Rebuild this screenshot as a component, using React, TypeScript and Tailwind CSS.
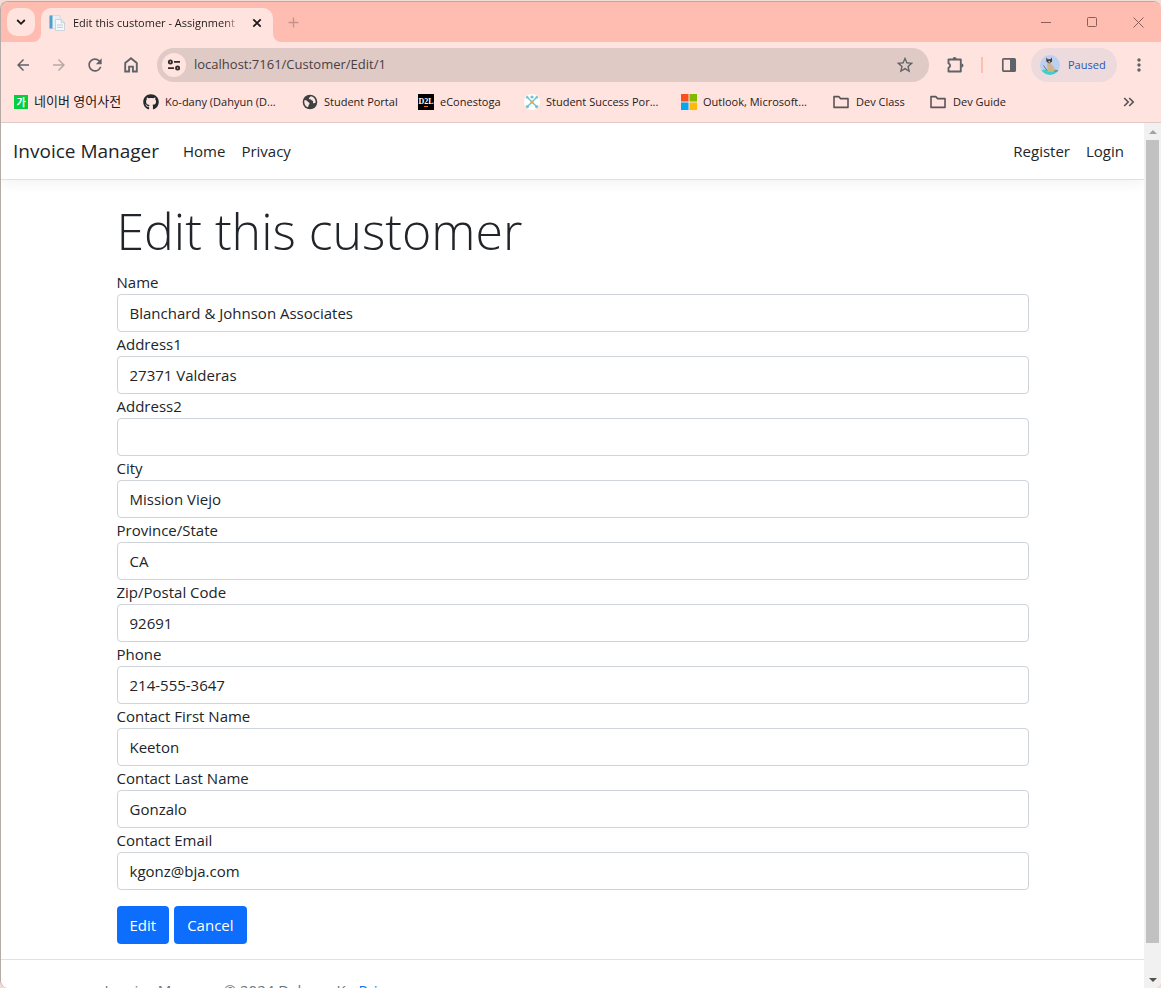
import type { ReactNode } from "react";
import { MdArrowBack, MdArrowForward, MdAdd, MdMoreVert, MdRefresh, MdStarBorder } from "react-icons/md";
import { FaGithub } from "react-icons/fa";

const iconButton = "flex h-7 w-7 shrink-0 items-center justify-center text-[#5f6368]";

function HomeIcon() {
  return (
    <svg width="16" height="18" viewBox="0 0 16 18" fill="none" stroke="currentColor" strokeWidth="1.9">
      <path d="M2.2 6.9 8 2.2l5.8 4.7v8.6H9.9v-4.9H6.1v4.9H2.2z" />
    </svg>
  );
}

function TuneIcon() {
  return (
    <svg width="16" height="16" viewBox="0 0 16 16" fill="none" stroke="#332b2d" strokeWidth="1.8">
      <circle cx="4.4" cy="4.9" r="1.6" />
      <path d="M8 4.9h6M2 11.1h6" />
      <circle cx="11.6" cy="11.1" r="1.6" />
    </svg>
  );
}

function ExtensionIcon() {
  return (
    <svg width="20" height="20" viewBox="0 0 20 20" fill="none">
      <path d="M3.5 4.5h12.3v12H3.5v-3.7a2.3 2.3 0 0 0 0-4.4z" stroke="#5f6368" strokeWidth="1.9" strokeLinejoin="round" />
      <path d="M7.6 3.9a2 2 0 0 1 4 0zM16.4 8.4a2.1 2.1 0 0 1 0 4.2z" fill="#5f6368" />
    </svg>
  );
}

function SidePanelIcon() {
  return (
    <svg width="16" height="16" viewBox="0 0 16 16">
      <rect x="1.8" y="1.8" width="12.4" height="12.4" rx="1" fill="none" stroke="#5f6368" strokeWidth="1.7" />
      <path d="M9 1.5h5v13H9z" fill="#5f6368" />
    </svg>
  );
}

function Avatar() {
  return (
    <svg width="20" height="20" viewBox="0 0 20 20">
      <clipPath id="avatar-clip"><circle cx="10" cy="10" r="10" /></clipPath>
      <g clipPath="url(#avatar-clip)">
        <path d="M0 0h20v20H0z" fill="#bccff0" />
        <path d="M0 15.5q10-2.5 20 0V20H0z" fill="#3fd0c9" />
        <path d="M7.4 7.5c1.2-1.3 3.2-.8 3.5.6.4 2.2 3.9 3.4 4.2 8.6H7.4C8.2 13 6.6 10.500 7.400 7.500z" fill="#cdb48c" />
        <path d="M6.200 2.600 7.800 4.200h2.600l1.600-1.600.1 3.800-2.900 2-2.900-2z" fill="#4a4038" />
        <path d="m8.200 6 1 2.300 1-2.300z" fill="#d8c4a0" />
        <path d="m3.500 10.500 3.500 5M14 16.200l4-.4" stroke="#88775e" strokeWidth="1" />
      </g>
    </svg>
  );
}

function DocumentIcon() {
  return (
    <svg width="16" height="16" viewBox="0 0 16 16">
      <path d="M1 .5h10v13H1z" fill="#e9f0f5" stroke="#c5d4de" strokeWidth=".6" />
      <path d="M.5.5h3v13h-3z" fill="#4f9fd0" />
      <path d="M6.500 4.500h6l3 3v8h-9z" fill="#f5f9fb" stroke="#b9c9d4" strokeWidth=".7" />
      <path d="M12.300 4.500v3.200h3.200M8 10h6M8 12.400h6" fill="none" stroke="#b3c3cf" strokeWidth=".8" />
    </svg>
  );
}

function NaverIcon() {
  return (
    <span className="flex h-3.5 w-3.5 items-center justify-center bg-[#03cf3e] font-['Noto_Sans_CJK_KR',sans-serif] text-[10px] leading-none font-bold text-white">가</span>
  );
}

function GlobeIcon() {
  return (
    <svg width="16" height="16" viewBox="0 0 16 16">
      <circle cx="8" cy="8" r="7.300" fill="#3c4043" />
      <path d="M2.300 6.200c1.600-.2 2.900.2 3.300 1.300.4.900 1.700.7 1.900 1.700.2 1-.9 1.300-.9 2.200 0 .8-.4 1.500-1.100 1.900C3.300 12.200 1.900 9.600 2.300 6.200zM8.700 2.300c-.2 1-1.300.9-1.700 1.600-.4.800.3 1.400 1.100 1.300 1-.1 1 1 1.900 1.200 1.100.3 1.300 1 1 1.800-.2.700.3 1.200 1 1.100l1.600-.5c.3-3.200-1.500-5.800-4.900-6.500z" fill="#ffe3de" />
    </svg>
  );
}

function D2LIcon() {
  return (
    <span className="flex h-4 w-4 items-center justify-center bg-black font-['Liberation_Serif',serif] text-[8px] leading-none font-bold text-white">
      D<span className="border-b border-[#e87722]">2</span>L
    </span>
  );
}

function SuccessIcon() {
  return (
    <svg width="16" height="16" viewBox="0 0 16 16">
      <circle cx="8" cy="8" r="8" fill="#fff" />
      <path d="m3.500 3.500 9 9m0-9-9 9" stroke="#72c3cb" strokeWidth="1.500" />
      <g fill="#72c3cb">
        <circle cx="3.200" cy="3.200" r="1.300" /><circle cx="12.800" cy="3.200" r="1.300" />
        <circle cx="3.400" cy="12.600" r="1.600" /><circle cx="12.600" cy="12.600" r="1.600" /><circle cx="8" cy="3" r="1.600" />
      </g>
      <circle cx="8" cy="8" r="1.500" fill="#f1a33b" />
    </svg>
  );
}

function MicrosoftIcon() {
  return (
    <svg width="16" height="16" viewBox="0 0 16 16">
      <path d="M0 0h7.500v7.500H0z" fill="#f8511f" /><path d="M8.500 0H16v7.500H8.500z" fill="#7fba00" />
      <path d="M0 8.500h7.500V16H0z" fill="#05a6f0" /><path d="M8.500 8.500H16V16H8.500z" fill="#ffba08" />
    </svg>
  );
}

function FolderIcon() {
  return (
    <svg width="18" height="16" viewBox="0 0 18 16" fill="none" stroke="#5a5558" strokeWidth="1.600" strokeLinejoin="round">
      <path d="M2 2.600h4.800l1.800 2H16v8.800H2z" />
    </svg>
  );
}

const bookmarks: { label: string; icon: ReactNode; style: string }[] = [
  { label: "네이버 영어사전", icon: <NaverIcon />, style: "w-[109px] text-[13px]" },
  { label: "Ko-dany (Dahyun (D...", icon: <FaGithub size={16} color="#24292f" />, style: "w-[139px] text-[11px]" },
  { label: "Student Portal", icon: <GlobeIcon />, style: "w-[96px] text-[11px]" },
  { label: "eConestoga", icon: <D2LIcon />, style: "w-[86px] text-[11px]" },
  { label: "Student Success Por...", icon: <SuccessIcon />, style: "w-[137px] text-[11px]" },
  { label: "Outlook, Microsoft...", icon: <MicrosoftIcon />, style: "w-[131px] text-[11px]" },
  { label: "Dev Class", icon: <FolderIcon />, style: "w-[77px] text-[11px]" },
  { label: "Dev Guide", icon: <FolderIcon />, style: "w-[80px] text-[11px]" },
];

const fields = [
  { id: "name", label: "Name", value: "Blanchard & Johnson Associates" },
  { id: "address1", label: "Address1", value: "27371 Valderas" },
  { id: "address2", label: "Address2", value: "" },
  { id: "city", label: "City", value: "Mission Viejo" },
  { id: "province", label: "Province/State", value: "CA" },
  { id: "zip", label: "Zip/Postal Code", value: "92691" },
  { id: "phone", label: "Phone", value: "214-555-3647" },
  { id: "first", label: "Contact First Name", value: "Keeton" },
  { id: "last", label: "Contact Last Name", value: "Gonzalo" },
  { id: "email", label: "Contact Email", value: "kgonz@bja.com" },
];

function TabStrip() {
  return (
    <div className="flex h-10 shrink-0 items-end justify-between bg-[#ffbdb1]">
      <div className="flex h-full items-end">
        <div className="flex h-full items-center px-[6px]">
          <button aria-label="Search tabs" className="flex h-7 w-7 items-center justify-center rounded-[10px] bg-[#ffe3de]">
            <svg width="10" height="8" viewBox="0 0 10 8" fill="none" stroke="#1f1a1a" strokeWidth="1.800"><path d="m1.200 2 3.800 3.800L8.800 2" /></svg>
          </button>
        </div>
        <div className="relative flex h-[34px] w-[232px] items-center rounded-t-[10px] bg-[#ffe3de] pb-1 pl-2">
          <svg className="absolute bottom-0 -left-2" width="8" height="8" viewBox="0 0 8 8"><path d="M8 0v8H0a8 8 0 0 0 8-8z" fill="#ffe3de" /></svg>
          <svg className="absolute -right-2 bottom-0" width="8" height="8" viewBox="0 0 8 8"><path d="M0 0v8h8a8 8 0 0 1-8-8z" fill="#ffe3de" /></svg>
          <DocumentIcon />
          <span className="ml-2 w-[168px] overflow-hidden mask-r-from-90% text-[11px] whitespace-nowrap text-[#1f1a1a]">Edit this customer - Assignment</span>
          <button aria-label="Close tab" className="ml-2 flex h-4 w-4 items-center justify-center text-[#1f1a1a]">
            <svg width="10" height="10" viewBox="0 0 10 10" stroke="currentColor" strokeWidth="1.800"><path d="m1.300 1.300 7.400 7.400m0-7.400-7.400 7.400" /></svg>
          </button>
        </div>
        <button aria-label="New tab" className="flex h-full w-10 items-center justify-center text-[#c4938c]"><MdAdd size={17} /></button>
      </div>
      <div className="flex h-full items-center text-[#8a5f58]">
        <button aria-label="Minimize" className="flex h-full w-[46px] items-center justify-center"><svg width="10" height="10" viewBox="0 0 10 10" stroke="currentColor"><path d="M0 5.500h10" /></svg></button>
        <button aria-label="Maximize" className="flex h-full w-[46px] items-center justify-center"><svg width="10" height="10" viewBox="0 0 10 10" fill="none" stroke="currentColor"><rect x=".5" y=".5" width="9" height="9" rx="1" /></svg></button>
        <button aria-label="Close window" className="flex h-full w-[46px] items-center justify-center"><svg width="11" height="11" viewBox="0 0 11 11" stroke="currentColor"><path d="m.5.5 10 10m0-10-10 10" /></svg></button>
      </div>
    </div>
  );
}

function Toolbar() {
  return (
    <div className="flex h-[46px] shrink-0 items-center px-2">
      <div className="flex items-center gap-2">
        <button aria-label="Back" className={iconButton}><MdArrowBack size={18} /></button>
        <button aria-label="Forward" className={iconButton + " opacity-45"}><MdArrowForward size={18} /></button>
        <button aria-label="Reload" className={iconButton}><MdRefresh size={20} /></button>
        <button aria-label="Home" className={iconButton}><HomeIcon /></button>
      </div>
      <div className="ml-3 flex h-[34px] flex-1 items-center rounded-full bg-[#dfcac5] pr-[14px] pl-[5px]">
        <button aria-label="Site information" className="flex h-6 w-6 shrink-0 items-center justify-center rounded-full bg-[#ffe3de]"><TuneIcon /></button>
        <input aria-label="Address" defaultValue="localhost:7161/Customer/Edit/1" className="ml-2 min-w-0 flex-1 bg-transparent text-[13px] text-[#4a4042] outline-none" />
        <button aria-label="Bookmark this page" className="text-[#5f6368]"><MdStarBorder size={20} /></button>
      </div>
      <button aria-label="Extensions" className="ml-4 flex h-7 w-5 items-center"><ExtensionIcon /></button>
      <span className="mx-4 h-4 w-[2px] bg-[#ffbdb1]" />
      <button aria-label="Side panel" className="flex h-7 w-5 items-center justify-center"><SidePanelIcon /></button>
      <button className="ml-3 flex h-[34px] w-[86px] items-center gap-2 rounded-full bg-[#eddadd] pl-[9px] text-[11px] text-[#2457b8]"><Avatar />Paused</button>
      <button aria-label="Menu" className="ml-2 flex h-7 w-7 items-center justify-center text-[#5f6368]"><MdMoreVert size={20} /></button>
    </div>
  );
}

function BookmarksBar() {
  return (
    <nav aria-label="Bookmarks" className="flex h-[35px] shrink-0 items-center border-b border-[#dfcac5] pr-[26px] pb-[6px] pl-[13px]">
      <div className="flex items-center gap-5">
        {bookmarks.map((item) => (
          <a key={item.label} href="#" className={"flex h-6 items-center gap-[6px] whitespace-nowrap text-[#1f1a1a] " + item.style}>
            <span className="shrink-0">{item.icon}</span>
            <span>{item.label}</span>
          </a>
        ))}
      </div>
      <button aria-label="More bookmarks" className="ml-auto text-[#5a5558]">
        <svg width="12" height="10" viewBox="0 0 12 10" fill="none" stroke="currentColor" strokeWidth="1.700"><path d="m1.200 1 4 4-4 4m5-8 4 4-4 4" /></svg>
      </button>
    </nav>
  );
}

function Scrollbar() {
  return (
    <div aria-hidden="true" className="flex w-[17px] shrink-0 flex-col items-center bg-[#f1f1f1]">
      <span className="flex h-[17px] items-center"><svg width="8" height="4" viewBox="0 0 8 4"><path d="m4 0 4 4H0z" fill="#a3a3a3" /></svg></span>
      <span className="w-[13px] flex-1 bg-[#c1c1c1]" />
      <span className="flex h-[45px] items-end pb-[6px]"><svg width="8" height="4" viewBox="0 0 8 4"><path d="M0 0h8L4 4z" fill="#505050" /></svg></span>
    </div>
  );
}

export default function App() {
  return (
    <div className="h-screen bg-[#f3dcd6] pt-px font-['Open_Sans','Noto_Sans_CJK_KR',sans-serif]">
      <div className="flex h-full flex-col overflow-hidden rounded-lg border-t border-l border-[#b5aaa5] bg-[#ffe3de]">
        <TabStrip />
        <Toolbar />
        <BookmarksBar />
        <div className="flex min-h-0 flex-1 bg-white text-[15px] leading-6 text-[#212529]">
          <div className="min-w-0 flex-1 overflow-hidden">
            <header className="mb-4 flex h-[57px] items-center justify-between border-b border-[#dee2e6] pr-5 pl-3 shadow-[0_4px_12px_rgba(0,0,0,0.05)]">
              <nav className="flex items-center">
                <a href="#" className="mr-6 text-[19px]">Invoice Manager</a>
                <a href="#" className="mr-4">Home</a>
                <a href="#">Privacy</a>
              </nav>
              <nav className="flex items-center gap-4">
                <a href="#">Register</a>
                <a href="#">Login</a>
              </nav>
            </header>
            <main className="mx-auto max-w-[960px] px-6">
              <h1 className="mb-1 text-[50px] leading-[70px] font-light">Edit this customer</h1>
              <form>
                {fields.map((field) => (
                  <div key={field.id}>
                    <label htmlFor={field.id} className="block">{field.label}</label>
                    <input id={field.id} defaultValue={field.value} className="block h-[38px] w-full rounded border border-[#ced4da] bg-white px-3" />
                  </div>
                ))}
                <div className="mt-4 mb-[15px] flex gap-[5px]">
                  <button type="button" className="h-[38px] rounded bg-[#0d6efd] px-[13px] text-white">Edit</button>
                  <button type="button" className="h-[38px] rounded bg-[#0d6efd] px-[13px] text-white">Cancel</button>
                </div>
              </form>
            </main>
            <footer className="border-t border-[#dee2e6] leading-[60px] text-[#6c757d]">
              <div className="mx-auto max-w-[960px] px-3">Invoice Manager © 2024 Dahyun Ko <a href="#" className="text-[#0d6efd]">Privacy</a></div>
            </footer>
          </div>
          <Scrollbar />
        </div>
      </div>
    </div>
  );
}
